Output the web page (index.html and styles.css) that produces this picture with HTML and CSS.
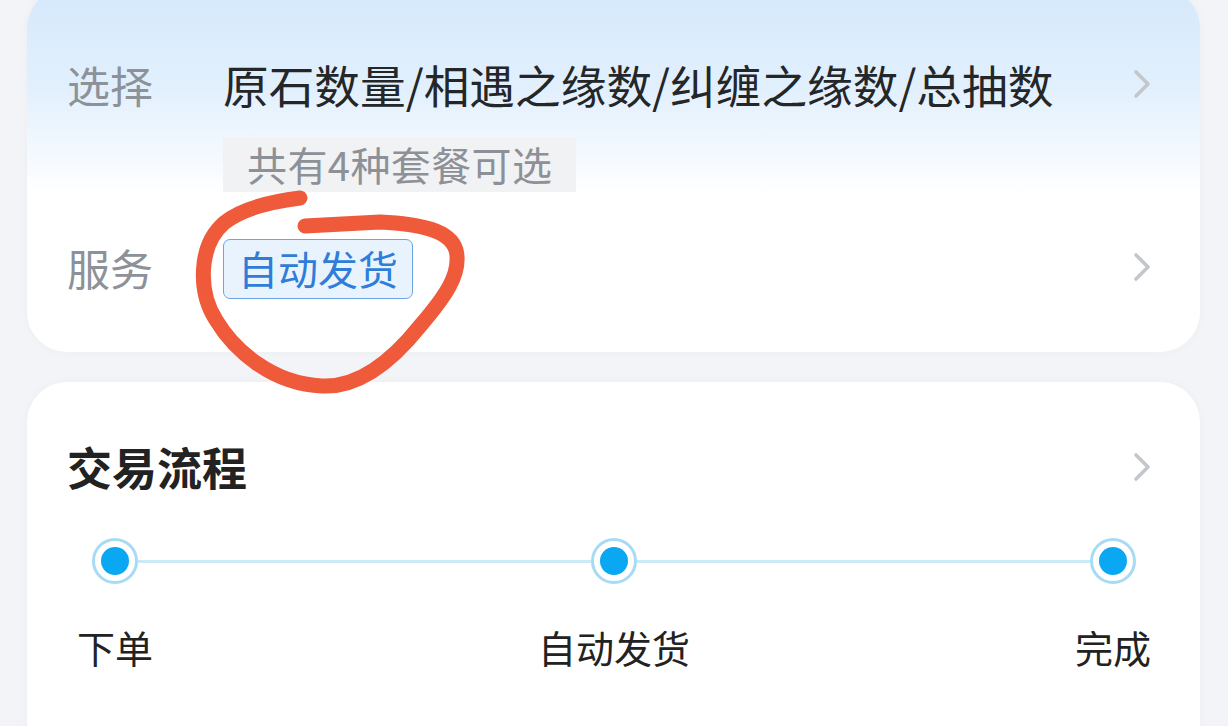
FILE: index.html
```html
<!DOCTYPE html>
<html lang="zh-CN">
<head>
<meta charset="utf-8">
<link rel="stylesheet" href="styles.css">
</head>
<body>
<div class="page">
  <section class="card card-top">
    <div class="row row-select">
      <div class="label">选择</div>
      <div class="value">原石数量/相遇之缘数/纠缠之缘数/总抽数</div>
      <svg class="chev" viewBox="0 0 20 30" width="20" height="30"><polyline points="4,3 16,15 4,27" fill="none" stroke="#c3c6cb" stroke-width="3.6" stroke-linecap="round" stroke-linejoin="round"/></svg>
    </div>
    <div class="chip-row">
      <span class="chip">共有4种套餐可选</span>
    </div>
    <div class="row row-service">
      <div class="label">服务</div>
      <div class="value"><span class="tag">自动发货</span></div>
      <svg class="chev" viewBox="0 0 20 30" width="20" height="30"><polyline points="4,3 16,15 4,27" fill="none" stroke="#c3c6cb" stroke-width="3.6" stroke-linecap="round" stroke-linejoin="round"/></svg>
    </div>
  </section>

  <section class="card card-flow">
    <div class="flow-head">
      <h2 class="flow-title">交易流程</h2>
      <svg class="chev" viewBox="0 0 20 30" width="20" height="30"><polyline points="4,3 16,15 4,27" fill="none" stroke="#c3c6cb" stroke-width="3.6" stroke-linecap="round" stroke-linejoin="round"/></svg>
    </div>
    <div class="track">
      <span class="dot"></span>
      <span class="line"></span>
      <span class="dot"></span>
      <span class="line"></span>
      <span class="dot"></span>
    </div>
    <div class="steps">
      <span class="step">下单</span>
      <span class="step">自动发货</span>
      <span class="step">完成</span>
    </div>
  </section>
</div>

<svg class="scribble" viewBox="0 0 1228 726" width="1228" height="726">
  <path d="M300,198 C268,202 240,210 224,223 C198,246 198,292 216,320 C234,350 272,384 322,386 C362,388 396,356 420,326 C444,298 462,274 456,250 C450,230 420,224 380,222 L305,226" fill="none" stroke="#ef5a3b" stroke-width="15" stroke-linecap="round" stroke-linejoin="round"/>
</svg>
</body>
</html>
```
FILE: styles.css
```css
* { box-sizing: border-box; }
html, body {
  margin: 0;
  padding: 0;
}
body {
  width: 1228px;
  height: 726px;
  overflow: hidden;
  background: #f3f4f7;
  font-family: "Noto Sans CJK SC", "Noto Sans", sans-serif;
  position: relative;
}
.page {
  padding: 0 28px 0 27px;
}
.card {
  background: #fff;
  border-radius: 40px;
  box-shadow: 0 0 10px rgba(40, 60, 90, 0.03);
}
.card-top {
  margin-top: -12px;
  height: 364px;
  padding: 66px 48px 0 40px;
  background: linear-gradient(180deg, #d5e9fb 0%, #e2f0fd 28%, #f4f9fe 46%, #ffffff 56%);
}
.row {
  display: flex;
  align-items: center;
}
.row-select {
  height: 60px;
}
.label {
  width: 156px;
  flex: none;
  font-size: 43px;
  line-height: 60px;
  color: #8d9198;
}
.value {
  flex: 1;
  font-size: 45.7px;
  line-height: 60px;
  color: #242628;
  white-space: nowrap;
}
.chev {
  flex: none;
  display: block;
}
.chip-row {
  padding-left: 156px;
  margin-top: 23px;
  height: 55px;
}
.chip {
  display: inline-block;
  height: 55px;
  line-height: 55px;
  padding: 0 24px;
  background: #f1f2f4;
  font-size: 40px;
  color: #8d9197;
  letter-spacing: 0.4px;
}
.row-service {
  margin-top: 45px;
  height: 60px;
}
.tag {
  display: inline-block;
  height: 60px;
  line-height: 56px;
  padding: 0 14px;
  border: 1.5px solid #6aa5e6;
  border-radius: 7px;
  background: #e9f3fd;
  color: #2f7dd8;
  font-size: 40px;
}
.card-flow {
  margin-top: 30px;
  height: 380px;
  padding: 55px 48px 0 40px;
}
.flow-head {
  display: flex;
  align-items: center;
  justify-content: space-between;
  height: 60px;
}
.flow-title {
  margin: 0;
  font-size: 45px;
  line-height: 60px;
  font-weight: 700;
  color: #222;
}
.track {
  display: flex;
  align-items: center;
  margin-top: 41px;
  padding: 0 0 0 25px;
  margin-right: -9px;
  padding-right: 25px;
}
.dot {
  flex: none;
  width: 46px;
  height: 46px;
  border-radius: 50%;
  border: 3px solid #a6dbf3;
  background: #fff;
  display: flex;
  align-items: center;
  justify-content: center;
}
.dot::after {
  content: "";
  width: 28px;
  height: 28px;
  border-radius: 50%;
  background: #0aa7f3;
}
.line {
  flex: 1;
  height: 3px;
  background: #cbe9f7;
}
.steps {
  display: flex;
  justify-content: space-between;
  margin-top: 38px;
  margin-right: -9px;
}
.step {
  width: 96px;
  text-align: center;
  white-space: nowrap;
  display: flex;
  justify-content: center;
  font-size: 38px;
  line-height: 50px;
  color: #222;
}
.scribble {
  position: absolute;
  left: 0;
  top: 0;
  pointer-events: none;
}
```
